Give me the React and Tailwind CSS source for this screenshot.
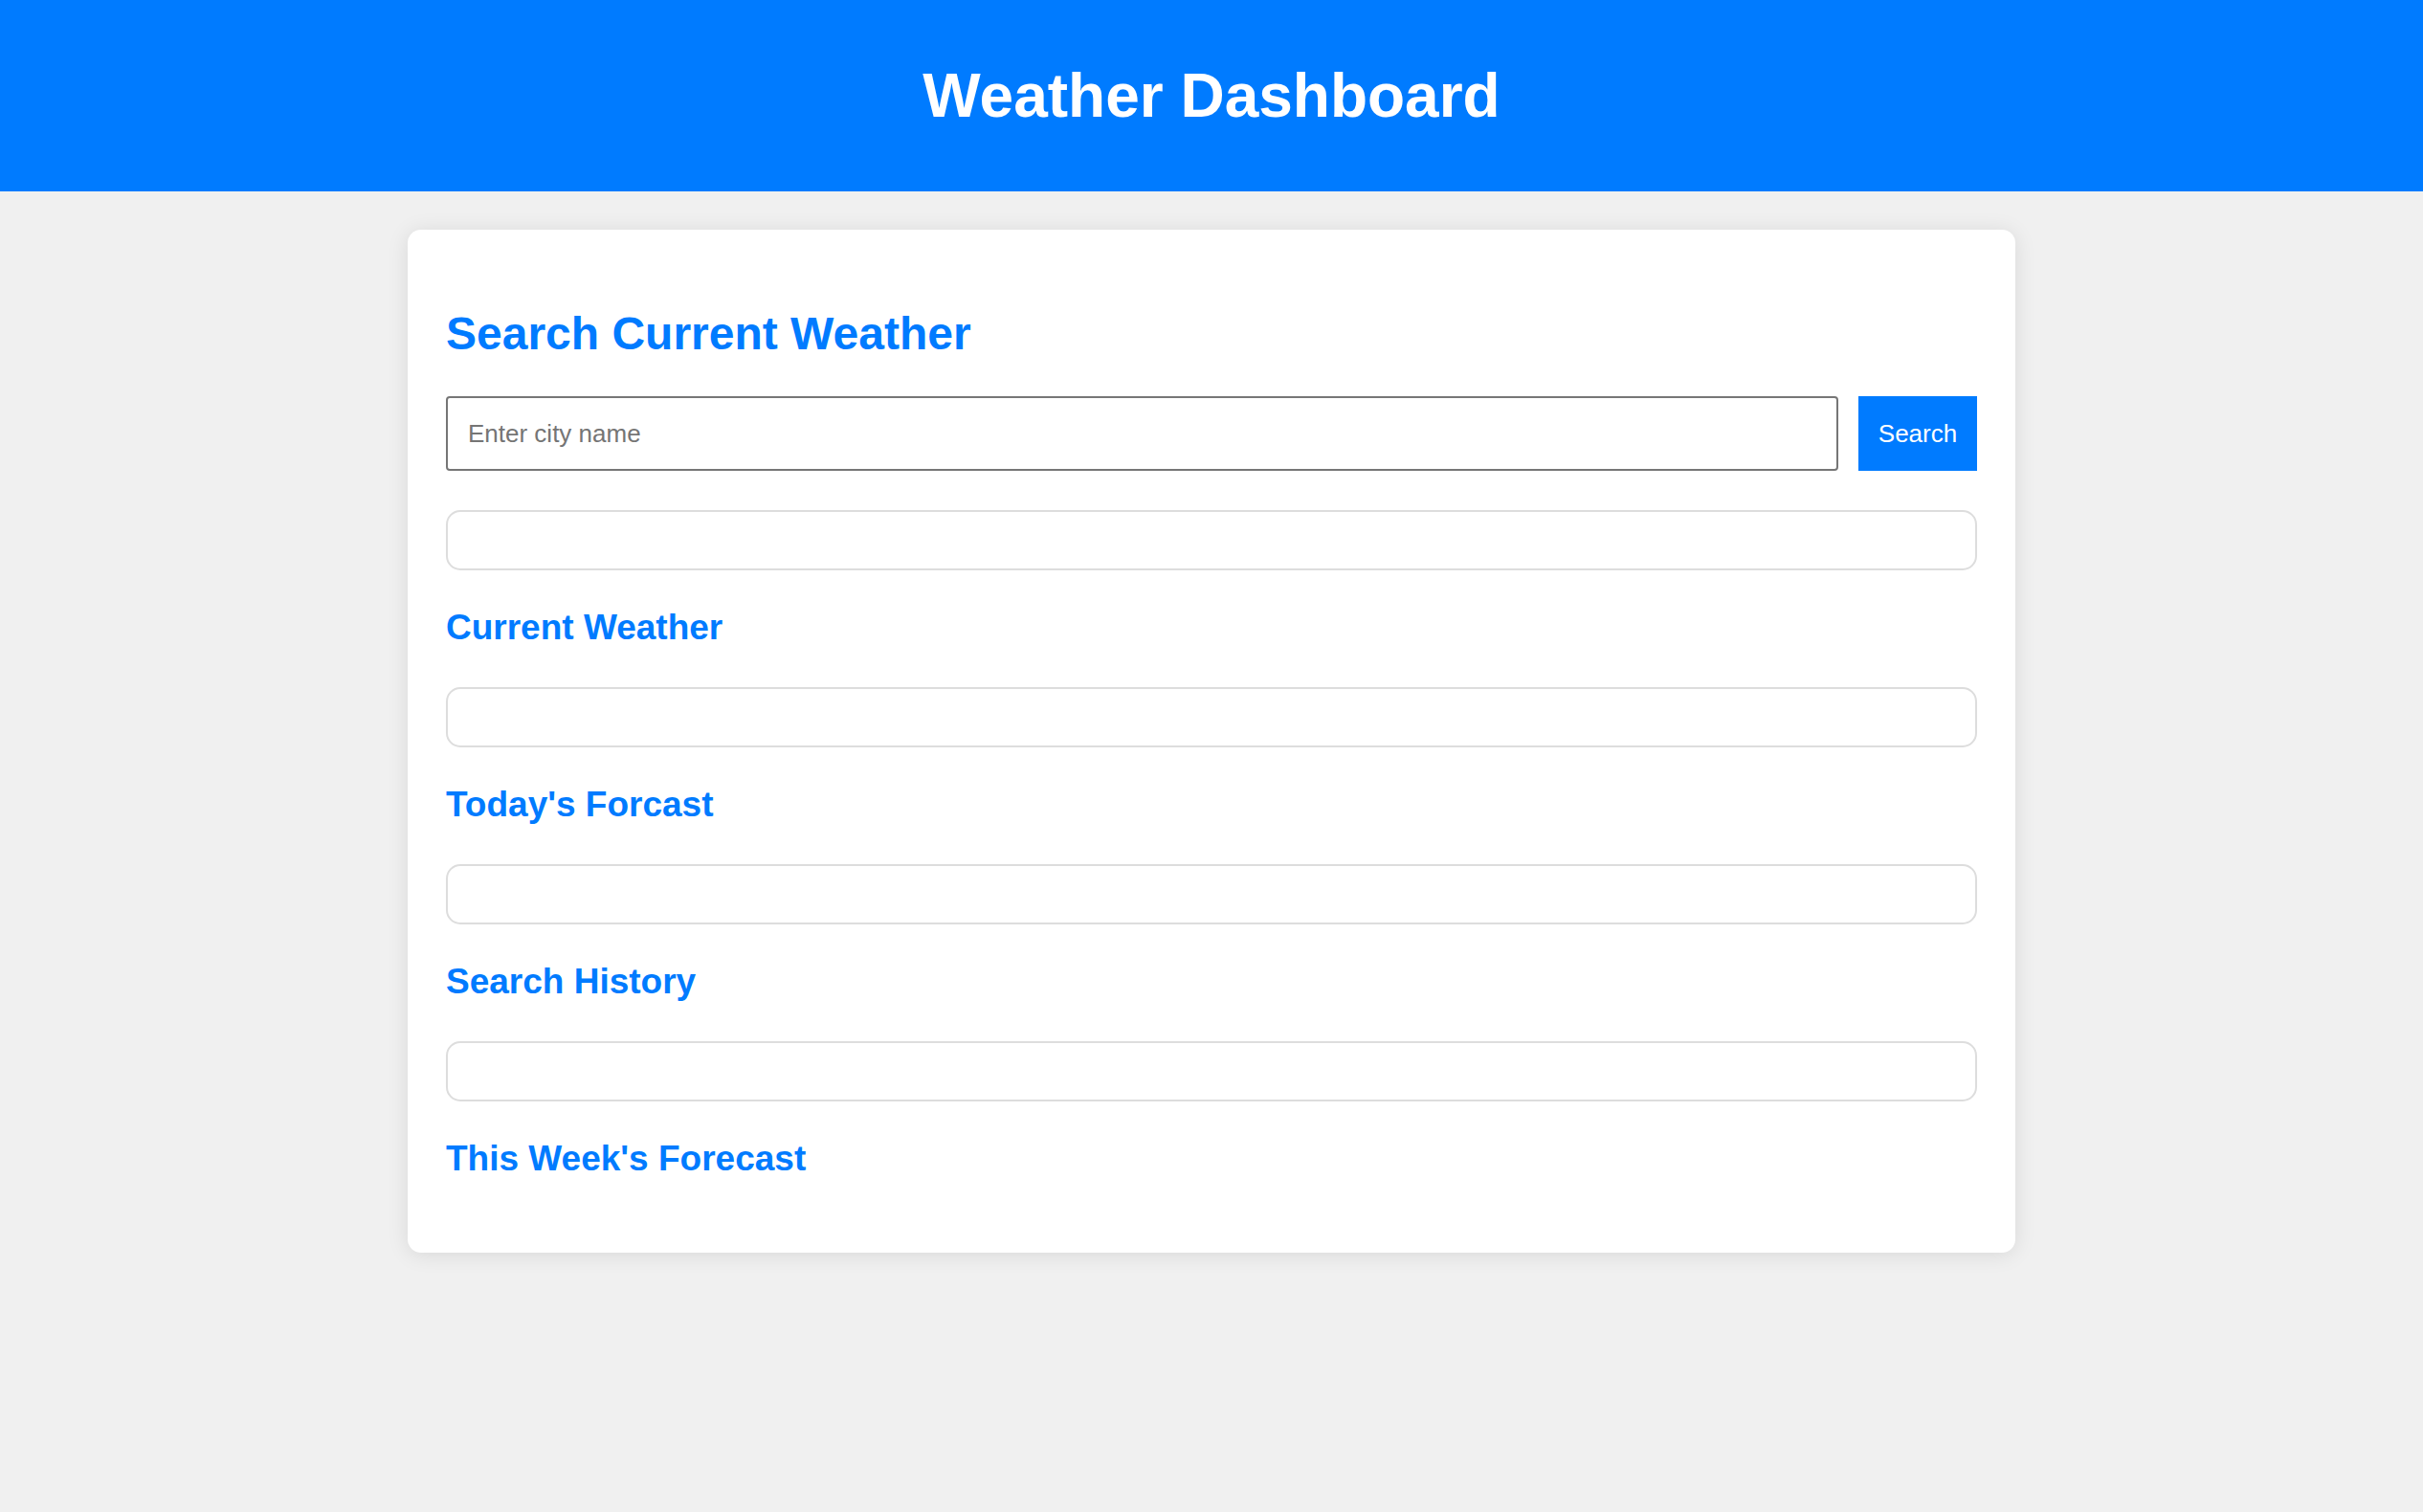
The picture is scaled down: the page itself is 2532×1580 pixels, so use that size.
export default function App() {
  const sections = ["Current Weather", "Today's Forcast", "Search History", "This Week's Forecast"];
  return (
    <div className="min-h-[1580px] bg-[#f0f0f0] font-['Liberation_Sans',Arial,sans-serif]">
      <header className="h-[200px] bg-[#007bff] flex items-center justify-center">
        <h1 className="text-[64px] font-bold text-white leading-normal">Weather Dashboard</h1>
      </header>
      <main className="w-[1680px] mx-auto mt-[40px] bg-white rounded-[14px] shadow-[0_2px_22px_rgba(0,0,0,0.1)] px-[40px] pt-[40px] pb-[40px]">
        <h2 className="text-[48px] font-bold text-[#007bff] leading-[55px] mt-[41px] mb-[38px]">Search Current Weather</h2>
        <div className="flex items-center gap-[21px]">
          <input
            type="text"
            placeholder="Enter city name"
            className="flex-1 h-[78px] border-2 border-[#767676] rounded-[4px] px-[21px] text-[26px] text-black placeholder:text-[#757575] outline-none font-['Liberation_Sans',Arial,sans-serif]"
          />
          <button className="h-[78px] w-[124px] bg-[#007bff] text-white text-[26px] font-['Liberation_Sans',Arial,sans-serif]">Search</button>
        </div>
        <div className="h-[63px] mt-[41px] border-2 border-[#dddddd] rounded-[15px]"></div>
        {sections.map((s, i) => (
          <div key={s}>
            <h3
              className={
                i < sections.length - 1
                  ? "text-[37px] font-bold text-[#007bff] leading-[42px] mt-[39px] mb-[41px]"
                  : "text-[37px] font-bold text-[#007bff] leading-[42px] mt-[39px] mb-[37px]"
              }
            >
              {s}
            </h3>
            {i < sections.length - 1 && (
              <div className="h-[63px] border-2 border-[#dddddd] rounded-[15px]"></div>
            )}
          </div>
        ))}
      </main>
    </div>
  );
}
